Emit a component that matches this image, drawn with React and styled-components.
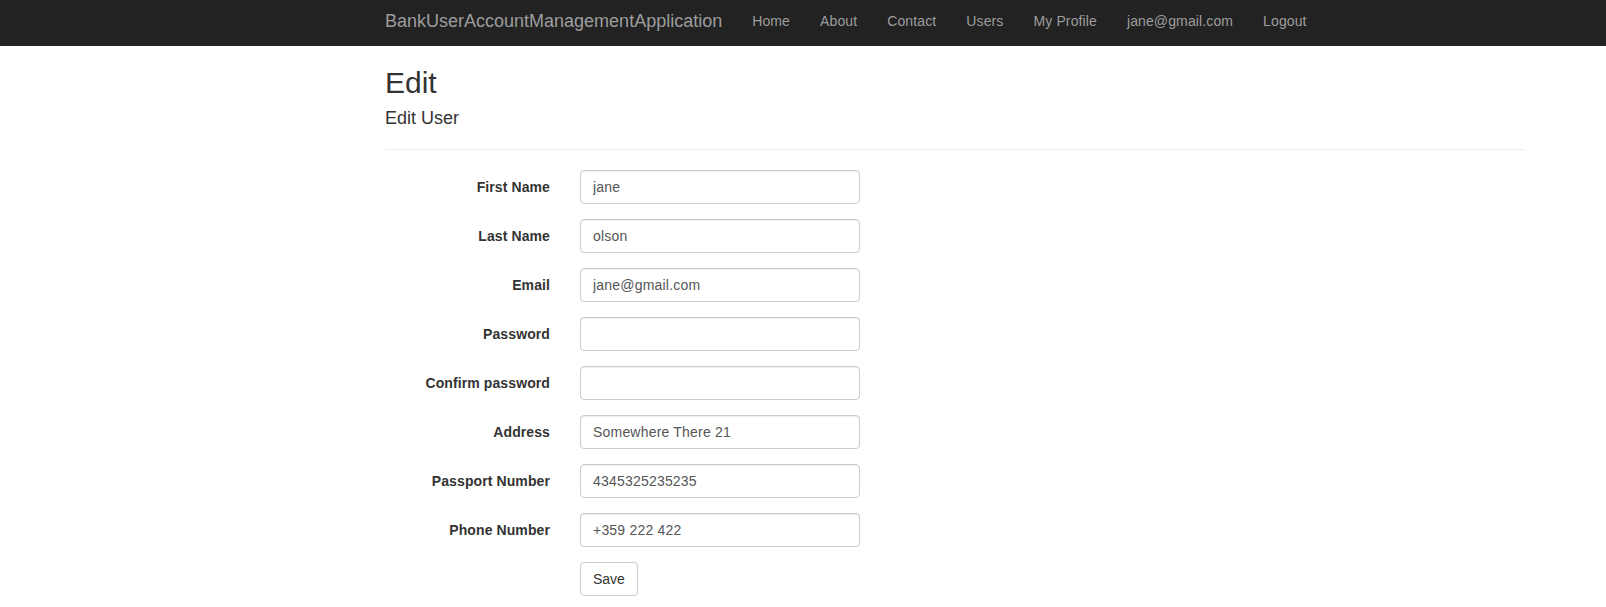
import React from 'react'
import styled, { createGlobalStyle } from 'styled-components'

const GlobalStyle = createGlobalStyle`
  *, *::before, *::after {
    box-sizing: border-box;
  }

  body {
    margin: 0;
    background: #fff;
    color: #333;
    font-family: 'Liberation Sans', Arial, Helvetica, sans-serif;
    font-size: 14px;
    line-height: 1.42857143;
  }
`

const Navbar = styled.nav`
  background-color: #222;
  height: 46px;
`

const NavContainer = styled.div`
  display: flex;
  align-items: flex-start;
  margin-left: 370px;
  padding: 0 15px;
  width: 1170px;
`

const Brand = styled.a`
  color: #9d9d9d;
  font-size: 18px;
  line-height: 20px;
  margin-left: -15px;
  padding: 11px 15px 15px;
  text-decoration: none;
`

const NavList = styled.ul`
  display: flex;
  list-style: none;
  margin: 0;
  padding: 0;
`

const NavLink = styled.a`
  color: #9d9d9d;
  display: block;
  letter-spacing: 0.12px;
  line-height: 20px;
  padding: 11px 15px 15px;
  text-decoration: none;
`

const Container = styled.main`
  margin-left: 370px;
  padding: 0 15px;
  width: 1170px;
`

const Title = styled.h2`
  font-size: 30px;
  font-weight: 500;
  line-height: 1.1;
  margin: 20px 0 10px;
`

const Subtitle = styled.h4`
  font-size: 18px;
  font-weight: 500;
  line-height: 1.1;
  margin: 10px 0;
`

const Divider = styled.hr`
  border: 0;
  border-top: 1px solid #eee;
  margin: 20px 0;
`

const FormGroup = styled.div`
  display: flex;
  margin: 0 -15px 15px;
`

const Label = styled.label`
  flex: 0 0 195px;
  font-weight: bold;
  letter-spacing: 0.1px;
  padding: 7px 15px 0;
  text-align: right;
`

const Field = styled.div`
  flex: 1;
  margin-left: ${p => (p.offset ? '195px' : '0')};
  padding: 0 15px;
`

const Input = styled.input`
  background: #fff;
  border: 1px solid #ccc;
  border-radius: 4px;
  box-shadow: inset 0 1px 1px rgba(0, 0, 0, 0.075);
  color: #555;
  display: block;
  font-family: inherit;
  font-size: 14px;
  height: 34px;
  letter-spacing: 0.2px;
  line-height: 1.42857143;
  max-width: 280px;
  padding: 6px 12px;
  width: 100%;
`

const Button = styled.button`
  background: #fff;
  border: 1px solid #ccc;
  border-radius: 4px;
  color: #333;
  cursor: pointer;
  font-family: inherit;
  font-size: 14px;
  line-height: 1.42857143;
  padding: 6px 12px;
`

const links = ['Home', 'About', 'Contact', 'Users', 'My Profile', 'jane@gmail.com', 'Logout']

const fields = [
  { id: 'FirstName', label: 'First Name', value: 'jane' },
  { id: 'LastName', label: 'Last Name', value: 'olson' },
  { id: 'Email', label: 'Email', value: 'jane@gmail.com' },
  { id: 'Password', label: 'Password', value: '', type: 'password' },
  { id: 'ConfirmPassword', label: 'Confirm password', value: '', type: 'password' },
  { id: 'Address', label: 'Address', value: 'Somewhere There 21' },
  { id: 'PassportNumber', label: 'Passport Number', value: '4345325235235' },
  { id: 'PhoneNumber', label: 'Phone Number', value: '+359 222 422' },
]

export default function App() {
  return (
    <>
      <GlobalStyle />
      <Navbar>
        <NavContainer>
          <Brand href="#">BankUserAccountManagementApplication</Brand>
          <NavList>
            {links.map(l => (
              <li key={l}>
                <NavLink href="#">{l}</NavLink>
              </li>
            ))}
          </NavList>
        </NavContainer>
      </Navbar>
      <Container>
        <Title>Edit</Title>
        <Subtitle>Edit User</Subtitle>
        <Divider />
        <form onSubmit={e => e.preventDefault()}>
          {fields.map(f => (
            <FormGroup key={f.id}>
              <Label htmlFor={f.id}>{f.label}</Label>
              <Field>
                <Input id={f.id} type={f.type || 'text'} defaultValue={f.value} />
              </Field>
            </FormGroup>
          ))}
          <FormGroup>
            <Field offset>
              <Button type="submit">Save</Button>
            </Field>
          </FormGroup>
        </form>
      </Container>
    </>
  )
}
